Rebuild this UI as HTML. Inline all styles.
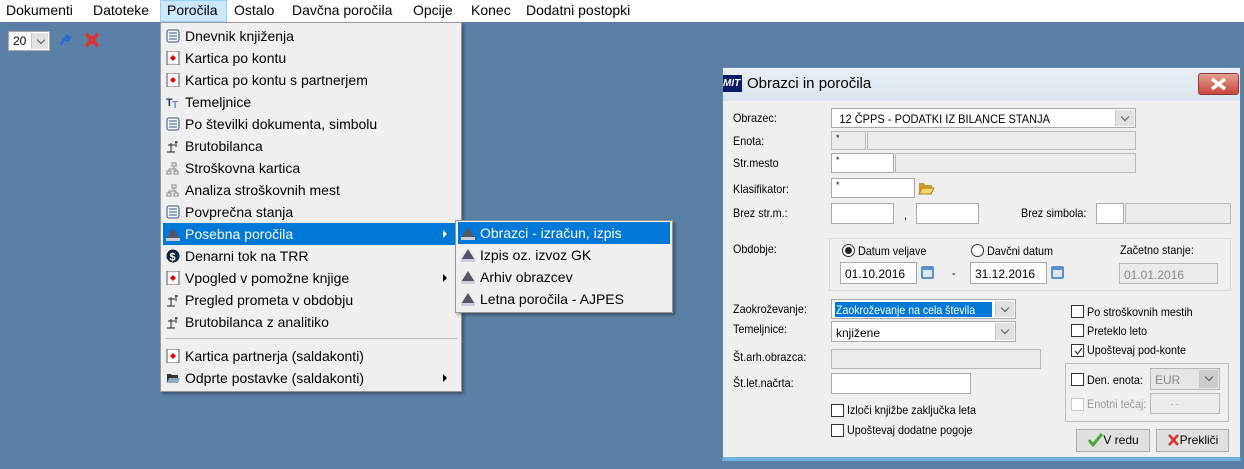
<!DOCTYPE html>
<html><head><meta charset="utf-8"><style>
*{margin:0;padding:0;box-sizing:border-box}
body{width:1244px;height:469px;background:#5b80a6;position:relative;overflow:hidden;font-family:"Liberation Sans",sans-serif}
.a{position:absolute}
#bar{left:0;top:0;width:1244px;height:22px;background:#fff;font-size:14px;color:#000}
#bar span{position:absolute;top:2px}
#menu{left:160px;top:22px;width:302px;height:370px;background:#f0f0f0;border:1px solid #979797;box-shadow:2px 2px 3px rgba(0,0,0,.35)}
.mi{position:absolute;left:2px;width:296px;height:22px;font-size:14px;line-height:22px;padding-left:22px;color:#000}
.mi.h{background:#0078d7;color:#fff}
.ic{position:absolute;left:3px;top:4px;width:14px;height:14px}
.arr{position:absolute;right:12px;top:7px;width:0;height:0;border-left:4px solid #000;border-top:4px solid transparent;border-bottom:4px solid transparent}
.h .arr{border-left-color:#fff}
#sub{left:455px;top:220px;width:218px;height:93px;background:#f0f0f0;border:1px solid #979797;box-shadow:2px 2px 3px rgba(0,0,0,.35)}
#sub .mi{width:212px}
#dlg{left:722px;top:67px;width:519px;height:394px;background:#f0f0f0;border:1px solid #6a86a5;border-bottom:4px solid #6fb4e0}
#title{left:0;top:0;width:517px;height:33px;background:linear-gradient(#e8eef5,#dbe5ef)}
.l{position:absolute;font-size:12px;color:#000;transform:scaleX(.9);transform-origin:left;white-space:nowrap}
.b{position:absolute;background:#fff;border:1px solid #aaa}
.g{position:absolute;background:#ebebeb;border:1px solid #b8b8b8}
.t{font-size:12px;padding:3px 0 0 8px;transform-origin:left;white-space:nowrap}
.dd{position:absolute;right:1px;top:1px;bottom:1px;width:19px;background:#e1e1e1;border-left:1px solid #c8c8c8}
.dd:after{content:"";position:absolute;left:6px;top:4px;width:5px;height:5px;border-right:1px solid #555;border-bottom:1px solid #555;transform:rotate(45deg)}
.cb{position:absolute;width:13px;height:13px;background:#fff;border:1px solid #333}
.btn{position:absolute;height:23px;background:#e1e1e1;border:1px solid #adadad;font-size:12px;line-height:21px;text-align:center}
</style></head><body>
<div id="bar" class="a">
<span style="left:6px">Dokumenti</span><span style="left:93px">Datoteke</span>
<div class="a" style="left:160px;top:0;width:67px;height:22px;background:#cce8ff;border:1px solid #99d1ff"></div>
<span style="left:167px">Poročila</span><span style="left:234px">Ostalo</span><span style="left:292px">Davčna poročila</span><span style="left:413px">Opcije</span><span style="left:471px">Konec</span><span style="left:526px">Dodatni postopki</span>
</div>
<div class="a" style="left:8px;top:31px;width:42px;height:20px;background:#fff;border:1px solid #aaa;font-size:12px;padding:2px 0 0 4px">20<div class="dd" style="width:17px"></div></div>
<svg class="a" style="left:58px;top:32px" width="16" height="16"><path d="M3 13 Q5 6 11 6 M8 3 L12 6 L8 9" stroke="#2d6fd0" stroke-width="3" fill="none"/></svg>
<svg class="a" style="left:83px;top:31px" width="18" height="18"><path d="M3 3 L15 15 M15 3 L3 15" stroke="#d33" stroke-width="4"/></svg>

<div id="menu" class="a">
<div class="mi" style="top:2px"><svg class="ic"><rect x="1" y="1" width="12" height="12" rx="2" fill="#fff" stroke="#2a4a8a"/><path d="M3 4h8M3 7h8M3 10h8" stroke="#2a4a8a"/></svg>Dnevnik knjiženja</div>
<div class="mi" style="top:24px"><svg class="ic"><rect x="1" y="0" width="12" height="14" fill="#fff" stroke="#555"/><path d="M7 4 L10 7 L7 10 L4 7Z" fill="#e00"/></svg>Kartica po kontu</div>
<div class="mi" style="top:46px"><svg class="ic"><rect x="1" y="0" width="12" height="14" fill="#fff" stroke="#555"/><path d="M7 4 L10 7 L7 10 L4 7Z" fill="#e00"/></svg>Kartica po kontu s partnerjem</div>
<div class="mi" style="top:68px"><svg class="ic"><text x="0" y="11" font-size="11" font-weight="bold" fill="#335">T</text><text x="6" y="13" font-size="10" font-weight="bold" fill="#6a8ad0">T</text></svg>Temeljnice</div>
<div class="mi" style="top:90px"><svg class="ic"><rect x="1" y="1" width="12" height="12" rx="2" fill="#fff" stroke="#2a4a8a"/><path d="M3 4h8M3 7h8M3 10h8" stroke="#2a4a8a"/></svg>Po številki dokumenta, simbolu</div>
<div class="mi" style="top:112px"><svg class="ic"><path d="M1 13h8M5 13V4M2 6h7M10 2v6M9 3h3" stroke="#222" fill="none"/></svg>Brutobilanca</div>
<div class="mi" style="top:134px"><svg class="ic"><path d="M6 2h4v3H6zM1 10h4v3H1zM8 10h4v3H8zM8 5v3H3v2M8 8h2v2" stroke="#888" fill="none"/></svg>Stroškovna kartica</div>
<div class="mi" style="top:156px"><svg class="ic"><path d="M6 2h4v3H6zM1 10h4v3H1zM8 10h4v3H8zM8 5v3H3v2M8 8h2v2" stroke="#888" fill="none"/></svg>Analiza stroškovnih mest</div>
<div class="mi" style="top:178px"><svg class="ic"><rect x="1" y="1" width="12" height="12" rx="2" fill="#fff" stroke="#2a4a8a"/><path d="M3 4h8M3 7h8M3 10h8" stroke="#2a4a8a"/></svg>Povprečna stanja</div>
<div class="mi h" style="top:200px"><svg class="ic"><path d="M7 1 L14 12 H0Z" fill="#556"/><rect x="0" y="11" width="14" height="3" fill="#ccd"/></svg>Posebna poročila<i class="arr"></i></div>
<div class="mi" style="top:222px"><svg class="ic"><circle cx="7" cy="7" r="6.5" fill="#123"/><text x="3.5" y="11.5" font-size="11" font-weight="bold" fill="#fff">$</text></svg>Denarni tok na TRR</div>
<div class="mi" style="top:244px"><svg class="ic"><rect x="1" y="0" width="12" height="14" fill="#fff" stroke="#555"/><path d="M7 4 L10 7 L7 10 L4 7Z" fill="#e00"/></svg>Vpogled v pomožne knjige<i class="arr"></i></div>
<div class="mi" style="top:266px"><svg class="ic"><path d="M1 13h8M5 13V4M2 6h7M10 2v6M9 3h3" stroke="#222" fill="none"/></svg>Pregled prometa v obdobju</div>
<div class="mi" style="top:288px"><svg class="ic"><path d="M1 13h8M5 13V4M2 6h7M10 2v6M9 3h3" stroke="#222" fill="none"/></svg>Brutobilanca z analitiko</div>
<div class="a" style="left:4px;top:315px;width:292px;height:1px;background:#bdbdbd"></div>
<div class="mi" style="top:322px"><svg class="ic"><rect x="1" y="0" width="12" height="14" fill="#fff" stroke="#555"/><path d="M7 4 L10 7 L7 10 L4 7Z" fill="#e00"/></svg>Kartica partnerja (saldakonti)</div>
<div class="mi" style="top:344px"><svg class="ic"><path d="M1 3h4l1 1h6v8H1z" fill="#333"/><path d="M3 7h11l-2 5H1z" fill="#8ab"/></svg>Odprte postavke (saldakonti)<i class="arr"></i></div>
</div>

<div id="sub" class="a">
<div class="mi h" style="top:1px"><svg class="ic"><path d="M7 1 L14 12 H0Z" fill="#556"/><rect x="0" y="11" width="14" height="3" fill="#ccd"/></svg>Obrazci - izračun, izpis</div>
<div class="mi" style="top:23px"><svg class="ic"><path d="M7 1 L14 12 H0Z" fill="#556"/><rect x="0" y="11" width="14" height="3" fill="#ccd"/></svg>Izpis oz. izvoz GK</div>
<div class="mi" style="top:45px"><svg class="ic"><path d="M7 1 L14 12 H0Z" fill="#556"/><rect x="0" y="11" width="14" height="3" fill="#ccd"/></svg>Arhiv obrazcev</div>
<div class="mi" style="top:67px"><svg class="ic"><path d="M7 1 L14 12 H0Z" fill="#556"/><rect x="0" y="11" width="14" height="3" fill="#ccd"/></svg>Letna poročila - AJPES</div>
</div>

<div id="dlg" class="a">
<div id="title" class="a">
<div class="a" style="left:0;top:7px;width:19px;height:17px;background:#0a1a6a;color:#fff;font-size:10px;font-weight:bold;font-style:italic;line-height:17px">MIT</div>
<div class="a" style="left:24px;top:7px;font-size:15px;color:#000">Obrazci in poročila</div>
<div class="a" style="left:475px;top:5px;width:41px;height:22px;background:linear-gradient(#e7a090,#c9453a);border:1px solid #8a3a30;border-radius:3px"><svg width="39" height="20"><path d="M13 5 L26 15 M26 5 L13 15" stroke="#fff" stroke-width="3.5"/></svg></div>
</div>
</div>
<div class="l" style="left:733px;top:111px">Obrazec:</div>
<div class="b" style="left:831px;top:108px;width:305px;height:20px"><div class="t" style="transform:scaleX(.92)">12 ČPPS - PODATKI IZ BILANCE STANJA</div><div class="dd"></div></div>
<div class="l" style="left:733px;top:134px">Enota:</div>
<div class="g" style="left:831px;top:131px;width:35px;height:19px;font-size:9px;padding:1px 4px">*</div>
<div class="g" style="left:867px;top:131px;width:269px;height:19px"></div>
<div class="l" style="left:733px;top:156px">Str.mesto</div>
<div class="b" style="left:831px;top:153px;width:63px;height:20px;font-size:9px;padding:1px 4px">*</div>
<div class="g" style="left:895px;top:153px;width:241px;height:20px"></div>
<div class="l" style="left:733px;top:182px">Klasifikator:</div>
<div class="b" style="left:831px;top:178px;width:84px;height:20px;font-size:9px;padding:1px 4px">*</div>
<svg class="a" style="left:918px;top:180px" width="17" height="16"><path d="M1 3h5l1 2h7v9H1z" fill="#c99a2e"/><path d="M4 8h12l-3 6H1z" fill="#f6d46a" stroke="#b08020"/></svg>
<div class="l" style="left:733px;top:206px">Brez str.m.:</div>
<div class="b" style="left:831px;top:203px;width:63px;height:21px"></div>
<div class="l" style="left:904px;top:208px">,</div>
<div class="b" style="left:916px;top:203px;width:63px;height:21px"></div>
<div class="l" style="left:1021px;top:206px">Brez simbola:</div>
<div class="b" style="left:1096px;top:203px;width:28px;height:21px"></div>
<div class="g" style="left:1125px;top:203px;width:106px;height:21px"></div>
<div class="a" style="left:829px;top:238px;width:402px;height:53px;border:1px solid #dcdcdc"></div>
<div class="l" style="left:733px;top:242px">Obdobje:</div>
<div class="a" style="left:842px;top:244px;width:13px;height:13px;border-radius:50%;border:1px solid #333;background:#fff"><div class="a" style="left:2px;top:2px;width:7px;height:7px;border-radius:50%;background:#222"></div></div>
<div class="l" style="left:858px;top:244px">Datum veljave</div>
<div class="a" style="left:971px;top:244px;width:13px;height:13px;border-radius:50%;border:1px solid #333;background:#fff"></div>
<div class="l" style="left:987px;top:244px">Davčni datum</div>
<div class="l" style="left:1120px;top:243px">Začetno stanje:</div>
<div class="b" style="left:840px;top:262px;width:77px;height:22px"><div class="t" style="padding:4px 0 0 4px">01.10.2016</div></div>
<svg class="a" style="left:920px;top:264px" width="15" height="16"><rect x="1" y="2" width="13" height="13" rx="2" fill="#5b8fd0"/><rect x="3" y="6" width="9" height="7" fill="#dce8f7"/></svg>
<div class="l" style="left:952px;top:266px">-</div>
<div class="b" style="left:970px;top:262px;width:77px;height:22px"><div class="t" style="padding:4px 0 0 4px">31.12.2016</div></div>
<svg class="a" style="left:1050px;top:264px" width="15" height="16"><rect x="1" y="2" width="13" height="13" rx="2" fill="#5b8fd0"/><rect x="3" y="6" width="9" height="7" fill="#dce8f7"/></svg>
<div class="g" style="left:1119px;top:263px;width:99px;height:21px;color:#888"><div class="t" style="padding:4px 0 0 4px">01.01.2016</div></div>

<div class="l" style="left:733px;top:302px">Zaokroževanje:</div>
<div class="b" style="left:831px;top:299px;width:185px;height:20px"><div class="a" style="left:3px;top:2px;width:157px;height:15px;background:#0078d7;color:#fff;font-size:12px;padding:1px 0 0 1px;overflow:hidden"><span style="display:inline-block;transform:scaleX(.88);transform-origin:left;white-space:nowrap">Zaokroževanje na cela števila</span></div><div class="dd"></div></div>
<div class="l" style="left:733px;top:322px">Temeljnice:</div>
<div class="b" style="left:831px;top:321px;width:185px;height:21px"><div class="t" style="padding:4px 0 0 4px">knjižene</div><div class="dd"></div></div>
<div class="l" style="left:733px;top:350px">Št.arh.obrazca:</div>
<div class="g" style="left:831px;top:349px;width:210px;height:20px"></div>
<div class="l" style="left:733px;top:376px">Št.let.načrta:</div>
<div class="b" style="left:831px;top:373px;width:140px;height:21px"></div>
<div class="cb" style="left:831px;top:404px"></div><div class="l" style="left:847px;top:403px">Izloči knjižbe zaključka leta</div>
<div class="cb" style="left:831px;top:424px"></div><div class="l" style="left:847px;top:423px">Upoštevaj dodatne pogoje</div>
<div class="cb" style="left:1071px;top:305px"></div><div class="l" style="left:1087px;top:305px">Po stroškovnih mestih</div>
<div class="cb" style="left:1071px;top:324px"></div><div class="l" style="left:1087px;top:324px">Preteklo leto</div>
<div class="cb" style="left:1071px;top:344px"><svg class="a" style="left:1px;top:1px" width="11" height="11"><path d="M2 5 L4.5 8 L9 2" stroke="#333" fill="none" stroke-width="1.3"/></svg></div><div class="l" style="left:1087px;top:343px">Upoštevaj pod-konte</div>
<div class="a" style="left:1065px;top:363px;width:164px;height:59px;border:1px solid #bdbdbd"></div>
<div class="cb" style="left:1071px;top:373px"></div><div class="l" style="left:1087px;top:373px">Den. enota:</div>
<div class="g" style="left:1150px;top:368px;width:70px;height:22px;color:#888;background:#e6e6e6"><div class="t" style="padding:4px 0 0 4px">EUR</div><div class="dd" style="background:#ccc"></div></div>
<div class="cb" style="left:1071px;top:398px;border-color:#ccc"></div><div class="l" style="left:1087px;top:397px;color:#999">Enotni tečaj:</div>
<div class="g" style="left:1150px;top:393px;width:70px;height:21px;font-size:9px;color:#888;padding:3px 0 0 20px">. .</div>
<div class="btn" style="left:1076px;top:429px;width:74px"><svg style="vertical-align:-3px" width="16" height="14"><path d="M2 7 L6 12 L15 1" stroke="#4aa832" stroke-width="3" fill="none"/></svg>V redu</div>
<div class="btn" style="left:1156px;top:429px;width:73px"><svg style="vertical-align:-3px" width="13" height="14"><path d="M2 2 L11 12 M11 2 L2 12" stroke="#e03030" stroke-width="2.5"/></svg>Prekliči</div>
</body></html>
